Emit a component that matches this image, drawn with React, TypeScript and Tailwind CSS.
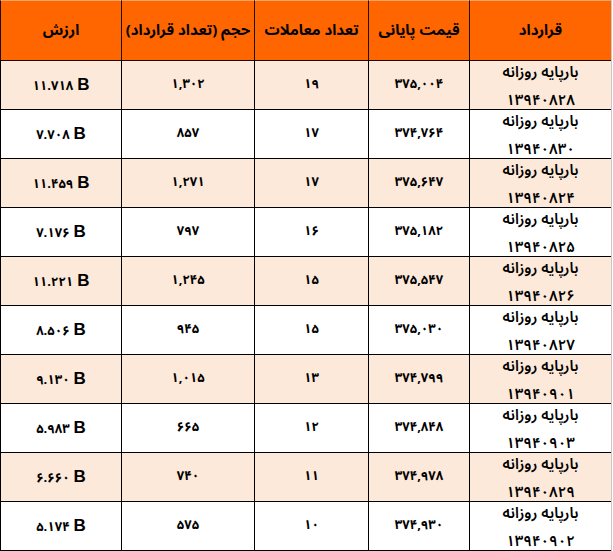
import React from 'react';

type Row = {
  code: string;
  price: string;
  trades: string;
  volume: string;
  value: string;
};

const rows: Row[] = [
  { code: '13940828', price: '375,004', trades: '19', volume: '1,302', value: '11.718' },
  { code: '13940830', price: '374,764', trades: '17', volume: '857', value: '7.708' },
  { code: '13940824', price: '375,647', trades: '17', volume: '1,271', value: '11.459' },
  { code: '13940825', price: '375,182', trades: '16', volume: '797', value: '7.176' },
  { code: '13940826', price: '375,547', trades: '15', volume: '1,245', value: '11.221' },
  { code: '13940827', price: '375,030', trades: '15', volume: '945', value: '8.506' },
  { code: '13940901', price: '374,799', trades: '13', volume: '1,015', value: '9.130' },
  { code: '13940903', price: '374,848', trades: '12', volume: '665', value: '5.983' },
  { code: '13940829', price: '374,978', trades: '11', volume: '740', value: '6.660' },
  { code: '13940902', price: '374,930', trades: '10', volume: '575', value: '5.174' },
];

const headers = ['قرارداد', 'قیمت پایانی', 'تعداد معاملات', 'حجم (تعداد قرارداد)', 'ارزش'];

// latin digits -> persian digits
const fa = (s: string) => s.replace(/[0-9]/g, (d) => '۰۱۲۳۴۵۶۷۸۹'[Number(d)]);

const font = { fontFamily: '"Noto Sans Arabic", "Noto Naskh Arabic", "DejaVu Sans", sans-serif' };

export default function App() {
  return (
    <div className="w-[613px] h-[551px] bg-white overflow-hidden" style={font}>
      <div
        dir="rtl"
        className="w-[612px] grid grid-cols-[142px_101px_114px_133px_121px] border-r border-[#c8c8c8] text-black"
      >
        {headers.map((h) => (
          <div
            key={h}
            className="h-[61px] flex items-center justify-center bg-[#ff6600] border-l border-b border-t border-l-[#1a0a00] border-b-[#1a0a00] border-t-[#f7a46b] text-[15px] font-bold whitespace-nowrap"
          >
            {h}
          </div>
        ))}

        {rows.map((r, i) => {
          const bg = i % 2 === 0 ? 'bg-[#fde9d9]' : 'bg-white';
          const cell = `h-[49px] flex items-center justify-center border-l border-b border-black font-bold text-[13px] ${bg}`;
          return (
            <React.Fragment key={r.code}>
              <div className={`h-[49px] flex flex-col items-center justify-between pt-[3px] pb-[1px] border-l border-b border-black ${bg} text-[15px] leading-[16px] font-semibold`}>
                <span>بارپایه روزانه</span>
                <span>{fa(r.code)}</span>
              </div>
              <div className={cell}>{fa(r.price)}</div>
              <div className={cell}>{fa(r.trades)}</div>
              <div className={cell}>{fa(r.volume)}</div>
              <div className={cell}>
                <span dir="ltr" className="flex items-baseline gap-[4px]">
                  <span className="tracking-[-1px]">{fa(r.value)}</span>
                  <span className="text-[17px]" style={{ fontFamily: '"Liberation Sans", sans-serif' }}>
                    B
                  </span>
                </span>
              </div>
            </React.Fragment>
          );
        })}
      </div>
    </div>
  );
}
